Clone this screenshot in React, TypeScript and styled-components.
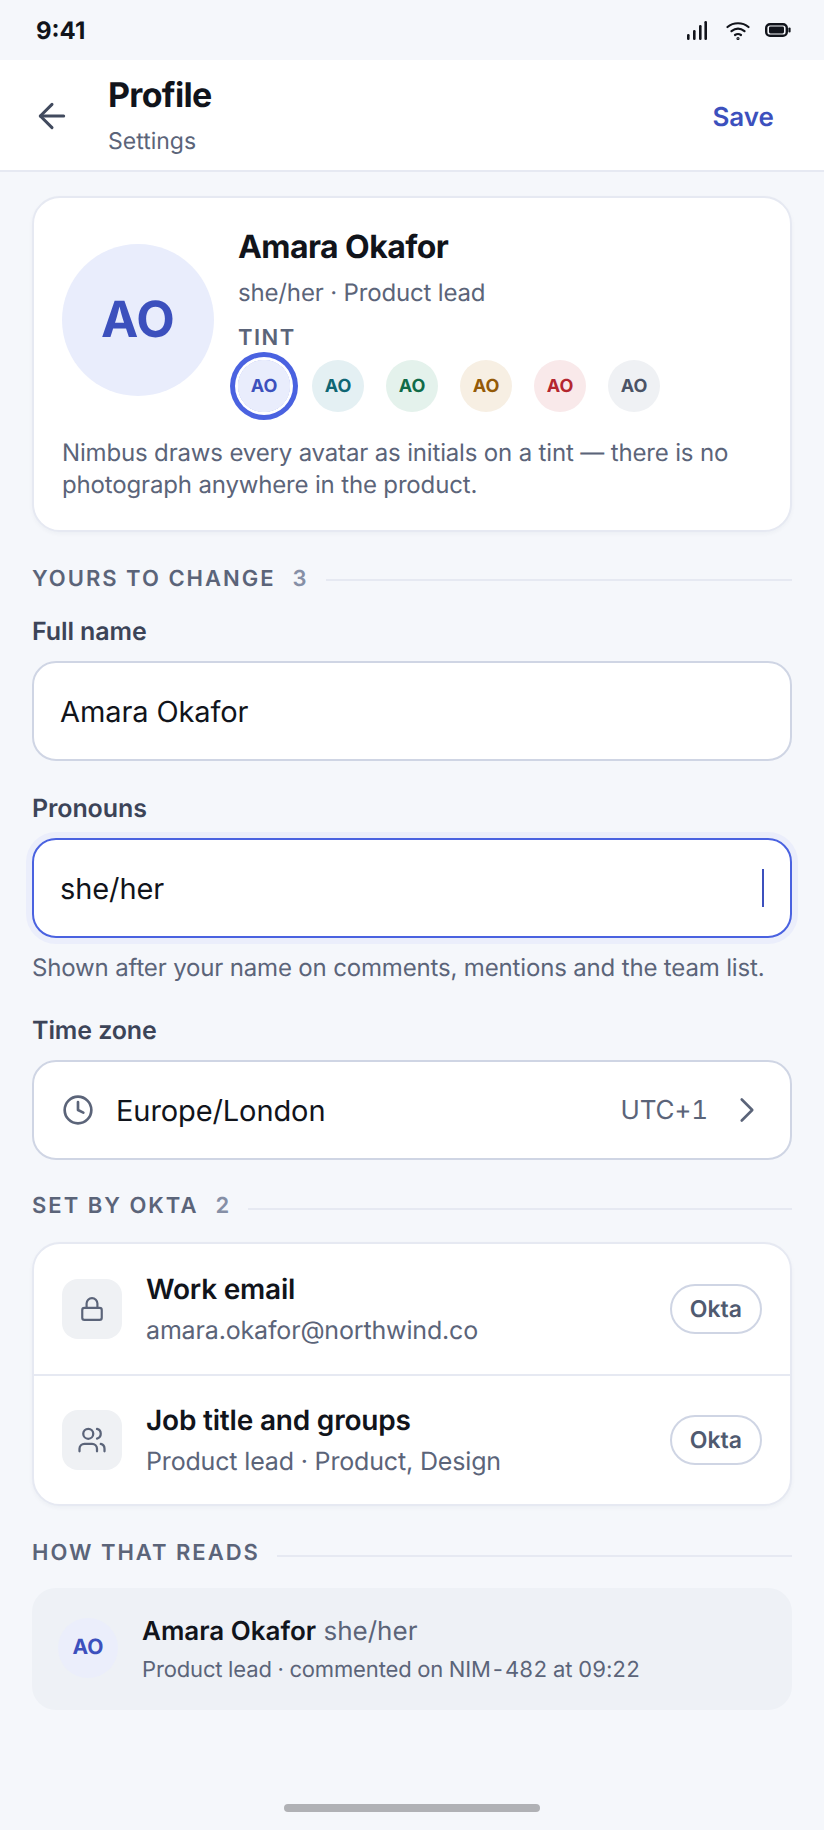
import styled, { createGlobalStyle } from "styled-components";
import { ArrowLeft, ChevronRight, Clock, Lock, Users } from "lucide-react";

const GlobalStyle = createGlobalStyle`
  html, body {
    margin: 0;
    padding: 0;
    background: #f5f7fb;
  }
  * {
    box-sizing: border-box;
  }
`;

const Screen = styled.div`
  width: 824px;
  height: 1830px;
  background: #f5f7fb;
  font-family: Inter, "Noto Sans", sans-serif;
  text-rendering: geometricPrecision;
  color: #11141b;
  display: flex;
  flex-direction: column;
  overflow: hidden;
`;

const StatusBar = styled.div`
  height: 60px;
  padding: 0 33px 0 36px;
  display: flex;
  align-items: center;
  justify-content: space-between;
`;

const Clockface = styled.span`
  font-size: 24px;
  font-weight: 700;
`;

const StatusIcons = styled.div`
  display: flex;
  align-items: center;
  gap: 15px;
`;

const Header = styled.header`
  height: 112px;
  background: #fff;
  border-bottom: 2px solid #e6e9f2;
  padding: 0 36px 0 32px;
  display: flex;
  align-items: center;
`;

const BackButton = styled.div`
  width: 76px;
  margin-top: 2px;
  display: flex;
  align-items: center;
  color: #414a5e;
`;

const Titles = styled.div`
  flex: 1;
  margin-top: 2px;
  display: flex;
  flex-direction: column;
  gap: 10px;
`;

const Title = styled.div`
  font-size: 34px;
  line-height: 40px;
  font-weight: 700;
  letter-spacing: -0.68px;
`;

const Subtitle = styled.div`
  font-size: 23px;
  line-height: 30px;
  color: #5b6479;
`;

const SaveButton = styled.span`
  font-size: 26px;
  font-weight: 600;
  color: #3c50bd;
  margin: 4px 14px 0 0;
`;

const Content = styled.main`
  padding: 24px 32px 0;
  display: flex;
  flex-direction: column;
`;

const HeroCard = styled.section`
  background: #fff;
  border: 2px solid #e6e9f2;
  border-radius: 28px;
  padding: 28px 28px 29px;
  box-shadow: 0 2px 4px rgba(30, 40, 80, 0.04);
`;

const HeroTop = styled.div`
  display: flex;
  gap: 24px;
  align-items: center;
`;

const Avatar = styled.div<{ $size: number; $font: number; $bg: string; $fg: string }>`
  width: ${({ $size }) => $size}px;
  height: ${({ $size }) => $size}px;
  flex: none;
  border-radius: 50%;
  background: ${({ $bg }) => $bg};
  color: ${({ $fg }) => $fg};
  font-size: ${({ $font }) => $font}px;
  font-weight: 700;
  display: flex;
  align-items: center;
  justify-content: center;
`;

const HeroAvatar = styled(Avatar)`
  margin-top: 2px;
`;

const HeroName = styled.div`
  margin-top: 1px;
  font-size: 32px;
  line-height: 40px;
  font-weight: 700;
  letter-spacing: -0.55px;
`;

const HeroMeta = styled.div`
  margin-top: 11px;
  font-size: 24px;
  line-height: 30px;
  letter-spacing: -0.16px;
  color: #5b6479;
`;

const TintLabel = styled.div`
  margin-top: 17px;
  font-size: 22px;
  line-height: 26px;
  font-weight: 600;
  letter-spacing: 1.5px;
  color: #5b6479;
`;

const Swatches = styled.div`
  margin-top: 9px;
  display: flex;
  gap: 22px;
`;

const Swatch = styled.div<{ $selected?: boolean }>`
  border-radius: 50%;
  ${({ $selected }) =>
    $selected ? "box-shadow: 0 0 0 3px #fff, 0 0 0 8px #4a62e0;" : ""}
`;

const HeroNote = styled.p`
  margin: 25px 0 0;
  font-size: 24px;
  line-height: 32px;
  letter-spacing: -0.16px;
  color: #5b6479;
`;

const SectionHead = styled.div<{ $top: number }>`
  margin-top: ${({ $top }) => $top}px;
  height: 26px;
  display: flex;
  align-items: center;
  gap: 17px;
  font-size: 22px;
  font-weight: 600;
  letter-spacing: 2px;
  color: #5b6479;
`;

const SectionCount = styled.span`
  color: #868fa6;
`;

const SectionLine = styled.div<{ $drop: number }>`
  flex: 1;
  height: 2px;
  margin-top: ${({ $drop }) => $drop * 2}px;
  background: #e6e9f2;
`;

const FieldLabel = styled.label<{ $top: number }>`
  display: block;
  margin-top: ${({ $top }) => $top}px;
  font-size: 25px;
  line-height: 30px;
  font-weight: 600;
  letter-spacing: -0.1px;
  color: #3c4458;
`;

const InputBox = styled.div<{ $focused?: boolean }>`
  margin-top: 14px;
  height: 100px;
  padding: 0 26px;
  background: #fff;
  border-radius: 24px;
  border: 2px solid ${({ $focused }) => ($focused ? "#4a62e0" : "#cfd5e4")};
  ${({ $focused }) => ($focused ? "box-shadow: 0 0 0 6px #ebeefb;" : "")}
  display: flex;
  align-items: center;
  gap: 22px;
  font-size: 29px;
  letter-spacing: -0.1px;
  color: #11141b;
`;

const FieldValue = styled.span`
  flex: 1;
`;

const Caret = styled.span`
  width: 2px;
  height: 38px;
  background: #3c50bd;
`;

const Helper = styled.div`
  margin-top: 15px;
  font-size: 24px;
  line-height: 30px;
  letter-spacing: -0.16px;
  color: #5b6479;
`;

const ZoneOffset = styled.span`
  font-size: 26px;
  font-variant-numeric: tabular-nums;
  color: #5b6479;
`;

const ZoneClock = styled(Clock)`
  margin-left: 2px;
  flex: none;
`;

const ZoneChevron = styled(ChevronRight)`
  margin: 0 -4px;
  flex: none;
`;

const LockedCard = styled.section`
  margin-top: 23px;
  background: #fff;
  border: 2px solid #e6e9f2;
  border-radius: 28px;
  box-shadow: 0 2px 4px rgba(30, 40, 80, 0.04);
`;

const LockedRow = styled.div`
  height: 130px;
  padding: 0 28px;
  display: flex;
  align-items: center;
  gap: 24px;
  & + & {
    border-top: 2px solid #e6e9f2;
  }
`;

const IconTile = styled.div`
  width: 60px;
  height: 60px;
  flex: none;
  border-radius: 16px;
  background: #eff1f4;
  color: #5b6479;
  display: flex;
  align-items: center;
  justify-content: center;
`;

const RowText = styled.div`
  flex: 1;
  display: flex;
  flex-direction: column;
  gap: 10px;
`;

const RowTitle = styled.div`
  font-size: 28px;
  line-height: 34px;
  font-weight: 600;
  letter-spacing: -0.2px;
`;

const RowSub = styled.div`
  font-size: 25px;
  line-height: 30px;
  letter-spacing: -0.16px;
  color: #5b6479;
`;

const Pill = styled.span`
  height: 50px;
  padding: 0 18px;
  border: 2px solid #cfd5e4;
  border-radius: 25px;
  display: flex;
  align-items: center;
  font-size: 23px;
  font-weight: 600;
  color: #505a70;
`;

const PreviewCard = styled.section`
  margin-top: 22px;
  height: 122px;
  padding: 0 26px;
  background: #eef1f6;
  border-radius: 24px;
  display: flex;
  align-items: center;
  gap: 24px;
`;

const PreviewAvatar = styled(Avatar)`
  margin-bottom: 3px;
`;

const PreviewText = styled.div`
  margin-top: 2px;
  display: flex;
  flex-direction: column;
  gap: 8px;
`;

const PreviewLine = styled.div`
  font-size: 26px;
  line-height: 32px;
  color: #5b6479;
`;

const PreviewName = styled.span`
  font-weight: 600;
  color: #11141b;
`;

const PreviewMeta = styled.div`
  font-size: 22px;
  line-height: 28px;
  letter-spacing: -0.15px;
  font-variant-numeric: tabular-nums;
  color: #5b6479;
`;

const HomeBar = styled.div`
  margin: auto auto 18px;
  width: 256px;
  height: 8px;
  border-radius: 4px;
  background: #b0b1b5;
`;

const tints = [
  { bg: "#e9edfc", fg: "#3c50bd" },
  { bg: "#e4f0f3", fg: "#0f6674" },
  { bg: "#e4f2ec", fg: "#106b48" },
  { bg: "#f7efe3", fg: "#945a08" },
  { bg: "#f9e9ea", fg: "#b4262f" },
  { bg: "#eff1f4", fg: "#4b5366" },
];

const SignalIcon = () => (
  <svg width="24" height="19" viewBox="0 0 24 19" fill="#11141b">
    <rect x="0" y="13" width="2.6" height="6" rx="1.2" />
    <rect x="6" y="9" width="2.6" height="10" rx="1.2" />
    <rect x="12" y="4" width="2.6" height="15" rx="1.2" />
    <rect x="17.4" y="0" width="2.6" height="19" rx="1.2" />
  </svg>
);

const WifiIcon = () => (
  <svg width="24" height="19" viewBox="0 0 24 19" fill="none" stroke="#11141b" strokeWidth="2.2" strokeLinecap="round">
    <path d="M1.5 6C7.5 1 16.5 1 22.5 6" />
    <path d="M5.5 10.2C9.5 7 14.5 7 18.5 10.2" />
    <path d="M9 14C10.8 12.8 13.2 12.8 15 14" />
    <circle cx="12" cy="17.6" r="0.5" fill="#11141b" />
  </svg>
);

const BatteryIcon = () => (
  <svg width="26" height="14" viewBox="0 0 26 14" fill="none">
    <rect x="1.2" y="1.2" width="20.6" height="11.6" rx="3.8" stroke="#11141b" strokeWidth="2.4" />
    <rect x="4" y="3.6" width="15" height="6.8" rx="1.4" fill="#11141b" />
    <rect x="23.4" y="4.5" width="2.2" height="5" rx="1.1" fill="#11141b" />
  </svg>
);

export default function App() {
  return (
    <>
      <GlobalStyle />
      <Screen>
        <StatusBar>
          <Clockface>9:41</Clockface>
          <StatusIcons>
            <SignalIcon />
            <WifiIcon />
            <BatteryIcon />
          </StatusIcons>
        </StatusBar>
        <Header>
          <BackButton>
            <ArrowLeft size={40} strokeWidth={1.8} />
          </BackButton>
          <Titles>
            <Title>Profile</Title>
            <Subtitle>Settings</Subtitle>
          </Titles>
          <SaveButton>Save</SaveButton>
        </Header>
        <Content>
          <HeroCard>
            <HeroTop>
              <HeroAvatar $size={152} $font={50} $bg={tints[0].bg} $fg={tints[0].fg}>
                AO
              </HeroAvatar>
              <div>
                <HeroName>Amara Okafor</HeroName>
                <HeroMeta>she/her · Product lead</HeroMeta>
                <TintLabel>TINT</TintLabel>
                <Swatches>
                  {tints.map((t, i) => (
                    <Swatch key={t.fg} $selected={i === 0}>
                      <Avatar $size={52} $font={18} $bg={t.bg} $fg={t.fg}>
                        AO
                      </Avatar>
                    </Swatch>
                  ))}
                </Swatches>
              </div>
            </HeroTop>
            <HeroNote>
              Nimbus draws every avatar as initials on a tint — there is no photograph anywhere in
              the product.
            </HeroNote>
          </HeroCard>

          <SectionHead $top={34}>
            <span>YOURS TO CHANGE</span>
            <SectionCount>3</SectionCount>
            <SectionLine $drop={1} />
          </SectionHead>

          <FieldLabel $top={25}>Full name</FieldLabel>
          <InputBox>
            <FieldValue>Amara Okafor</FieldValue>
          </InputBox>

          <FieldLabel $top={33}>Pronouns</FieldLabel>
          <InputBox $focused>
            <FieldValue>she/her</FieldValue>
            <Caret />
          </InputBox>
          <Helper>Shown after your name on comments, mentions and the team list.</Helper>

          <FieldLabel $top={33}>Time zone</FieldLabel>
          <InputBox>
            <ZoneClock size={32} color="#5b6479" strokeWidth={2} />
            <FieldValue>Europe/London</FieldValue>
            <ZoneOffset>UTC+1</ZoneOffset>
            <ZoneChevron size={42} color="#5b6479" strokeWidth={1.5} />
          </InputBox>

          <SectionHead $top={33}>
            <span>SET BY OKTA</span>
            <SectionCount>2</SectionCount>
            <SectionLine $drop={3} />
          </SectionHead>

          <LockedCard>
            <LockedRow>
              <IconTile>
                <Lock size={26} strokeWidth={2} />
              </IconTile>
              <RowText>
                <RowTitle>Work email</RowTitle>
                <RowSub>amara.okafor@northwind.co</RowSub>
              </RowText>
              <Pill>Okta</Pill>
            </LockedRow>
            <LockedRow>
              <IconTile>
                <Users size={30} strokeWidth={1.8} />
              </IconTile>
              <RowText>
                <RowTitle>Job title and groups</RowTitle>
                <RowSub>Product lead · Product, Design</RowSub>
              </RowText>
              <Pill>Okta</Pill>
            </LockedRow>
          </LockedCard>

          <SectionHead $top={34}>
            <span>HOW THAT READS</span>
            <SectionLine $drop={3} />
          </SectionHead>

          <PreviewCard>
            <PreviewAvatar $size={60} $font={21} $bg="#ebeefb" $fg={tints[0].fg}>
              AO
            </PreviewAvatar>
            <PreviewText>
              <PreviewLine>
                <PreviewName>Amara Okafor</PreviewName> she/her
              </PreviewLine>
              <PreviewMeta>Product lead · commented on NIM-482 at 09:22</PreviewMeta>
            </PreviewText>
          </PreviewCard>
        </Content>
        <HomeBar />
      </Screen>
    </>
  );
}
